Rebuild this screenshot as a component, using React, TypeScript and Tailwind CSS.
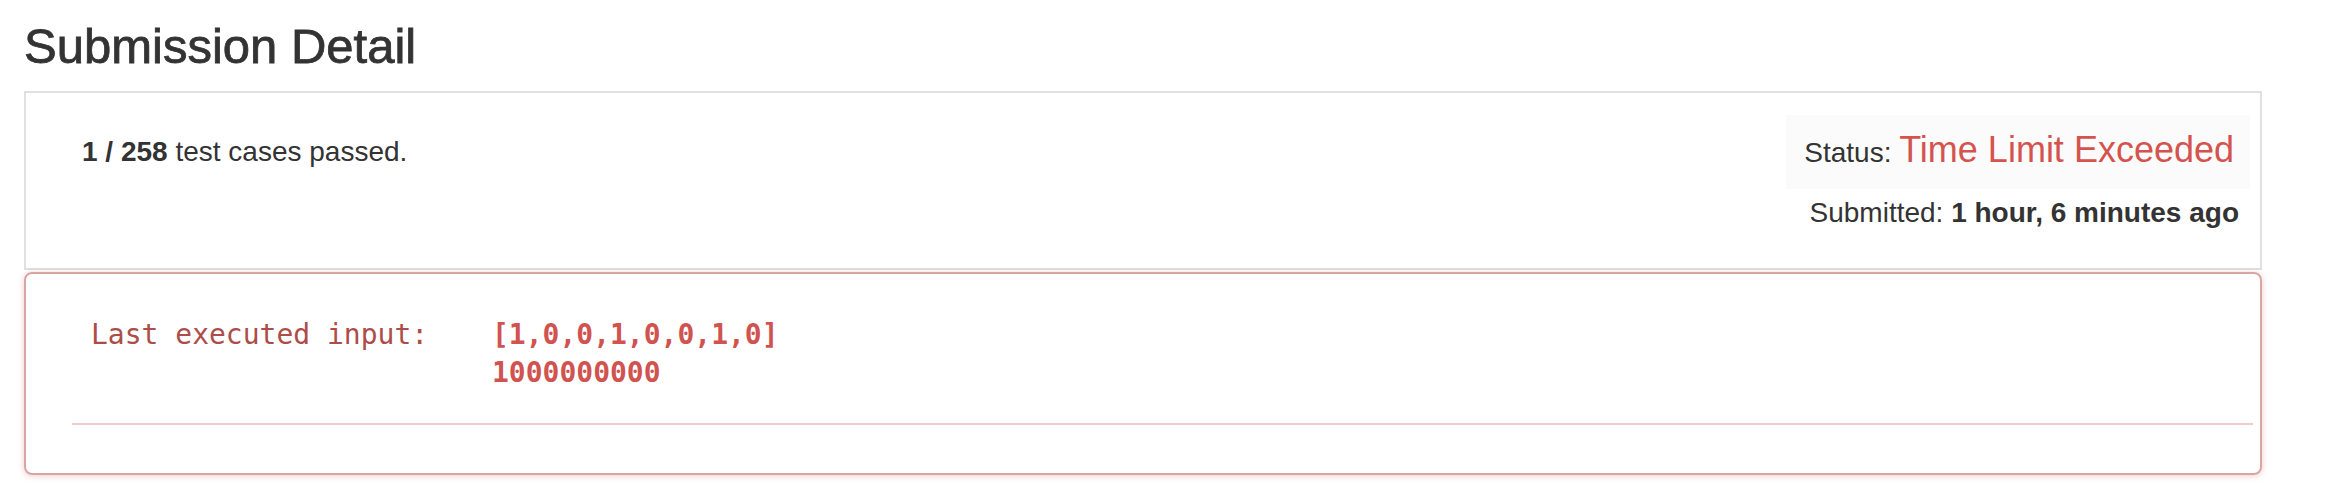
const sans = { fontFamily: '"Liberation Sans", Arial, sans-serif' }

const SubmissionSummary = () => (
  <div className="flex h-[179px] items-start justify-between border-2 border-[#e0e0e0] pt-[22px] pl-[56px] pr-[10px]">
    <p className="mt-[17px] text-[28px] leading-[40px] text-[#333]">
      <strong className="font-bold">1 / 258</strong> test cases passed.
    </p>
    <div className="flex flex-col items-end">
      <div className="h-[74px] bg-[#fbfbfb] pl-[18px] pr-[16px] text-[28px] leading-[70px] text-[#333]">
        Status: <span className="text-[36px] leading-[70px] text-[#d4534f]">Time Limit Exceeded</span>
      </div>
      <p className="mt-[4px] mr-[11px] text-[28px] leading-[40px] text-[#333]">
        Submitted: <strong className="font-bold">1 hour, 6 minutes ago</strong>
      </p>
    </div>
  </div>
)

const LastInput = () => (
  <div className="mt-[2px] h-[203px] rounded-[8px] border-2 border-[#d9a4a4] pl-[46px] pr-[7px] pt-[42px] shadow-[0_1px_6px_rgba(200,90,90,0.3)]">
    <div
      className="flex pl-[19px] text-[28px] leading-[38px]"
      style={{ fontFamily: '"DejaVu Sans Mono", Menlo, monospace' }}
    >
      <span className="w-[401px] shrink-0 text-[#ad4d49]">Last executed input:</span>
      <div className="font-bold text-[#d05350]">
        <div>[1,0,0,1,0,0,1,0]</div>
        <div>1000000000</div>
      </div>
    </div>
    <div className="mt-[31px] h-[2px] bg-[#f2cccc]" />
  </div>
)

export default function App() {
  return (
    <div className="h-[504px] w-[2340px] overflow-hidden bg-white pl-[24px] pr-[78px]" style={sans}>
      <h3 className="mt-[20px] mb-[18px] text-[49px] leading-[53px] font-normal text-[#333] [-webkit-text-stroke:0.8px_#333]">
        Submission Detail
      </h3>
      <SubmissionSummary />
      <LastInput />
    </div>
  )
}
